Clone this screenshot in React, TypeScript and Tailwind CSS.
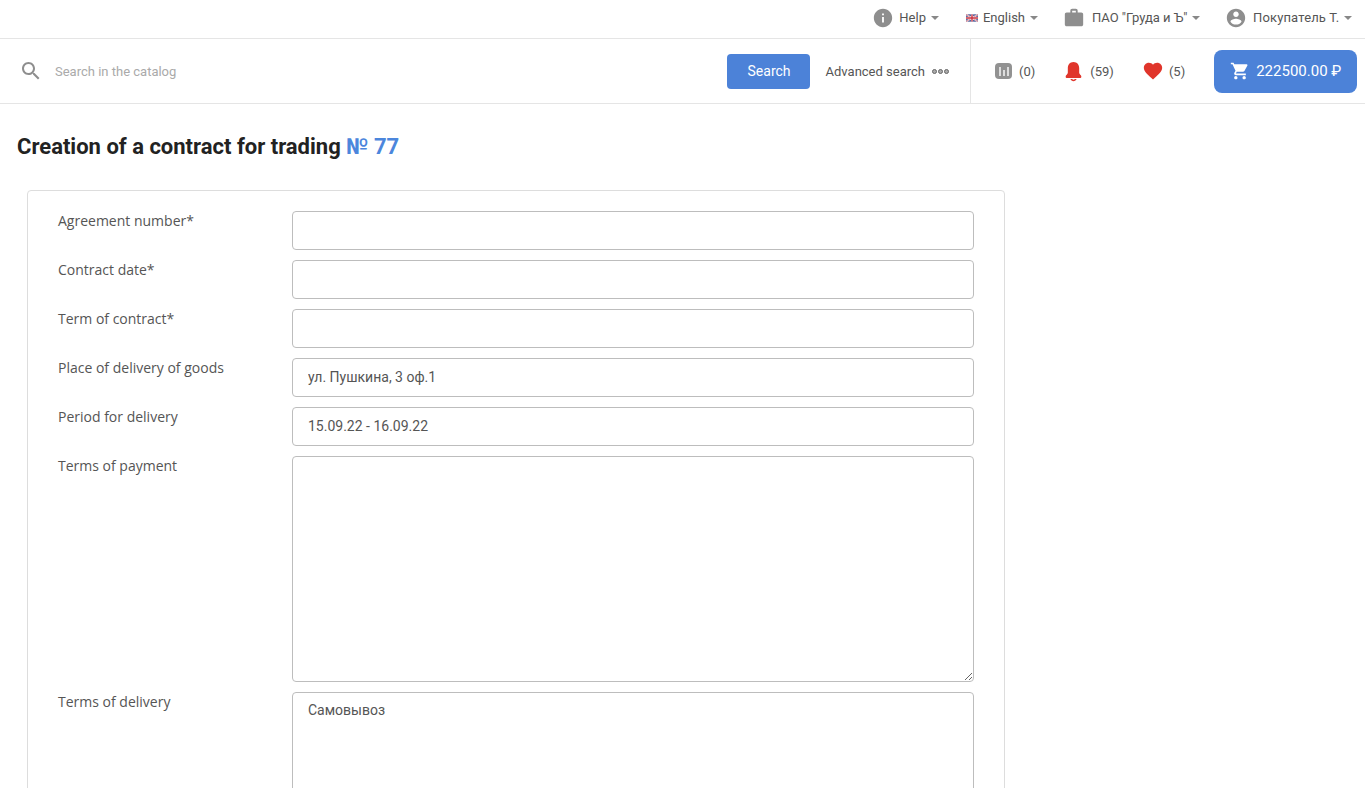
import React from 'react';

const Icon = ({ d, className }: { d: string; className: string }) => (
  <svg viewBox="0 0 24 24" fill="currentColor" className={className}>
    <path d={d} />
  </svg>
);

const icons = {
  info: "M12 2C6.48 2 2 6.48 2 12s4.48 10 10 10 10-4.48 10-10S17.52 2 12 2zm1 15h-2v-6h2v6zm0-8h-2V7h2v2z",
  work: "M20 6h-4V4c0-1.11-.89-2-2-2h-4c-1.11 0-2 .89-2 2v2H4c-1.11 0-1.99.89-1.99 2L2 19c0 1.11.89 2 2 2h16c1.11 0 2-.89 2-2V8c0-1.11-.89-2-2-2zm-6 0h-4V4h4v2z",
  user: "M12 2C6.48 2 2 6.48 2 12s4.48 10 10 10 10-4.48 10-10S17.52 2 12 2zm0 3c1.66 0 3 1.34 3 3s-1.34 3-3 3-3-1.34-3-3 1.34-3 3-3zm0 14.2c-2.5 0-4.71-1.28-6-3.22.03-1.99 4-3.08 6-3.08 1.99 0 5.97 1.09 6 3.08-1.29 1.94-3.5 3.22-6 3.22z",
  search: "M15.5 14h-.79l-.28-.27C15.41 12.59 16 11.11 16 9.5 16 5.91 13.09 3 9.5 3S3 5.91 3 9.5 5.91 16 9.5 16c1.61 0 3.09-.59 4.23-1.57l.27.28v.79l5 4.99L20.49 19l-4.99-5zm-6 0C7.01 14 5 11.99 5 9.5S7.01 5 9.5 5 14 7.01 14 9.5 11.99 14 9.5 14z",
  cart: "M7 18c-1.1 0-1.99.9-1.99 2S5.9 22 7 22s2-.9 2-2-.9-2-2-2zM1 2v2h2l3.6 7.59-1.35 2.45c-.16.28-.25.61-.25.96 0 1.1.9 2 2 2h12v-2H7.42c-.14 0-.25-.11-.25-.25l.03-.12.9-1.63h7.45c.75 0 1.41-.41 1.75-1.03l3.58-6.49c.08-.14.12-.31.12-.48 0-.55-.45-1-1-1H5.21l-.94-2H1zm16 16c-1.1 0-1.99.9-1.99 2s.89 2 1.99 2 2-.9 2-2-.9-2-2-2z",
  heart: "M12 21.35l-1.45-1.32C5.4 15.36 2 12.28 2 8.5 2 5.42 4.42 3 7.5 3c1.74 0 3.41.81 4.5 2.09C13.09 3.81 14.76 3 16.5 3 19.58 3 22 5.42 22 8.5c0 3.78-3.4 6.86-8.55 11.54L12 21.35z",
  bell: "M12 1C7.8 1 5.5 4.2 5.5 8v5.5C5.5 15.5 3 16 3 18c0 1 .7 1.5 1.7 1.5h14.6c1 0 1.7-.5 1.7-1.5 0-2-2.5-2.5-2.5-4.5V8C18.5 4.2 16.2 1 12 1zM8.5 20.5c.5 1.6 2 2.5 3.5 2.5s3-.9 3.5-2.5h-2c-.3.5-.9.8-1.5.8s-1.2-.3-1.5-.8h-2z",
};

const Caret = () => <span className="ml-[5px] border-x-4 border-t-4 border-x-transparent border-t-[#888] mt-[-1px]" />;

const UkFlag = () => (
  <svg viewBox="0 0 60 36" className="w-[12px] h-[8px]">
    <rect width="60" height="36" fill="#2b3f86" />
    <path d="M0 0L60 36M60 0L0 36" stroke="#fff" strokeWidth="8" />
    <path d="M0 0L60 36M60 0L0 36" stroke="#c8303e" strokeWidth="3" />
    <path d="M30 0V36M0 18H60" stroke="#fff" strokeWidth="12" />
    <path d="M30 0V36M0 18H60" stroke="#c8303e" strokeWidth="7" />
  </svg>
);

const CompareIcon = () => (
  <span className="w-[17px] h-[16px] rounded-[4px] bg-[#929292] flex items-end justify-center gap-[2px] pb-[3px]">
    <span className="w-[2px] h-[9px] bg-[#ddd]" />
    <span className="w-[2px] h-[6px] bg-[#ddd]" />
    <span className="w-[2px] h-[9px] bg-[#ddd]" />
  </span>
);

const Dot = () => <span className="w-[5px] h-[5px] rounded-full border border-[#666] bg-[#aaa]" />;

const fields = [
  { label: "Agreement number*", value: "" },
  { label: "Contract date*", value: "" },
  { label: "Term of contract*", value: "" },
  { label: "Place of delivery of goods", value: "ул. Пушкина, 3 оф.1" },
  { label: "Period for delivery", value: "15.09.22 - 16.09.22" },
];

const Row = ({ label, children }: { label: string; children: React.ReactNode }) => (
  <div className="flex mb-[10px]">
    <label className="w-[234px] shrink-0 font-['Open_Sans',sans-serif] text-[14px] leading-[20px] text-[#555]">{label}</label>
    <div className="flex-1 flex">{children}</div>
  </div>
);

const controlClass =
  "w-full border border-[#bdbdbd] rounded-[4px] px-[15px] text-[14px] text-[#555] font-['Roboto',sans-serif] outline-none bg-white";

export default function App() {
  return (
    <div className="h-screen overflow-hidden bg-white font-['Roboto',sans-serif] text-[#444]">
      <div className="h-[39px] pb-[2px] border-b border-[#e5e5e5] flex items-center justify-end pr-[13px] text-[13px] text-[#555]">
        <div className="flex items-center">
          <Icon d={icons.info} className="w-[22px] h-[22px] text-[#8e8e8e] mr-[5px] ml-[-2px]" />
          <span>Help</span>
          <Caret />
        </div>
        <div className="flex items-center ml-[27px]">
          <UkFlag />
          <span className="ml-[5px]">English</span>
          <Caret />
        </div>
        <div className="flex items-center ml-[27px]">
          <Icon d={icons.work} className="w-[22px] h-[22px] text-[#8e8e8e] mr-[7px] ml-[-2px]" />
          <span className="w-[95px] whitespace-nowrap">ПАО "Груда и Ъ"</span>
          <Caret />
        </div>
        <div className="flex items-center ml-[27px]">
          <Icon d={icons.user} className="w-[22px] h-[22px] text-[#8e8e8e] mr-[6px] ml-[-2px]" />
          <span className="w-[86px] whitespace-nowrap tracking-[0.15px]">Покупатель Т.</span>
          <Caret />
        </div>
      </div>

      <div className="h-[65px] border-b border-[#e5e5e5] flex">
        <div className="w-[971px] border-r border-[#e5e5e5] flex items-center pl-[19px] pr-[21px]">
          <Icon d={icons.search} className="w-[24px] h-[24px] text-[#8e8e8e] shrink-0" />
          <input
            placeholder="Search in the catalog"
            className="flex-1 ml-[12px] pt-[2px] text-[13px] outline-none placeholder:text-[#aaa] bg-transparent"
          />
          <button className="w-[83px] h-[35px] pl-[2px] pt-[1px] rounded-[4px] bg-[#4c82d8] text-white text-[14px]">Search</button>
          <span className="ml-[16px] pt-[2px] text-[13px] text-[#555]">Advanced search</span>
          <span className="ml-[7px] mt-[1px] flex gap-[1px]">
            <Dot />
            <Dot />
            <Dot />
          </span>
        </div>
        <div className="flex-1 flex items-center text-[13px] text-[#555]">
          <div className="flex items-center ml-[24px]">
            <CompareIcon />
            <span className="ml-[7px] pt-[1px]">(0)</span>
          </div>
          <div className="flex items-center ml-[28px]">
            <Icon d={icons.bell} className="w-[21px] h-[21px] text-[#e0352b] mr-[6px] mt-[1px]" />
            <span className="pt-[1px]">(59)</span>
          </div>
          <div className="flex items-center ml-[29px]">
            <Icon d={icons.heart} className="w-[22px] h-[22px] text-[#e0352b] mr-[5px] ml-[-1px] mt-[-1px]" />
            <span className="pt-[1px]">(5)</span>
          </div>
          <button className="ml-[29px] w-[143px] h-[43px] rounded-[8px] bg-[#4c82d8] text-white text-[15px] flex items-center pl-[16px] gap-[6px]">
            <Icon d={icons.cart} className="w-[20px] h-[20px]" />
            <span>222500.00 ₽</span>
          </button>
        </div>
      </div>

      <div className="px-[17px] pt-[28px]">
        <h1 className="text-[22px] leading-[30px] font-bold text-[#222]">
          Creation of a contract for trading <span className="text-[#4c86dc]">№ 77</span>
        </h1>
      </div>

      <div className="ml-[27px] mt-[28px] w-[978px] border border-[#ddd] rounded-[4px] pt-[20px] px-[30px]">
        {fields.map((f) => (
          <Row key={f.label} label={f.label}>
            <input readOnly value={f.value} className={controlClass + " h-[39px] pb-[2px]"} />
          </Row>
        ))}
        <Row label="Terms of payment">
          <textarea readOnly className={controlClass + " h-[226px] pt-[7px] pb-[8px] leading-[20px] block"} />
        </Row>
        <Row label="Terms of delivery">
          <textarea readOnly value="Самовывоз" className={controlClass + " h-[226px] pt-[7px] pb-[8px] leading-[20px] block"} />
        </Row>
      </div>
    </div>
  );
}
